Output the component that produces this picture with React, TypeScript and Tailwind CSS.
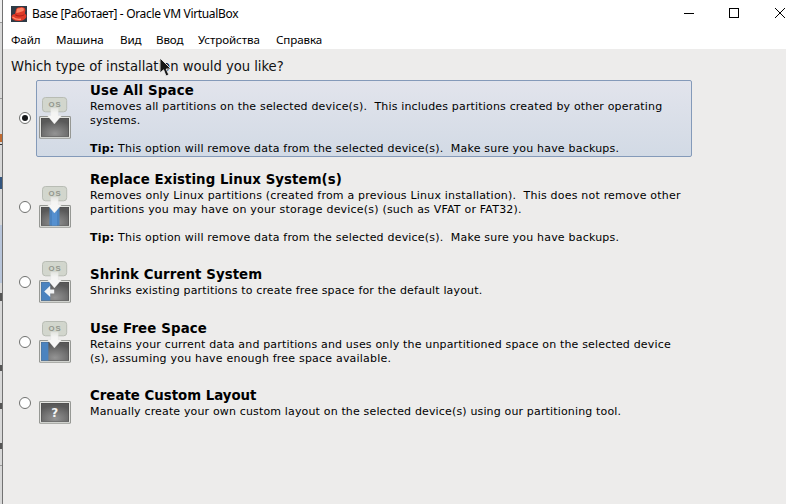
import type { ReactNode } from "react";

type Kind = "all" | "replace" | "shrink" | "free" | "custom";

function DiskIcon({ kind }: { kind: Kind }) {
  const id = `disk-${kind}`;
  return (
    <svg width="34" height="48" viewBox="0 0 34 48" className="block shrink-0">
      <defs>
        <radialGradient id={id} cx="50%" cy="85%" r="75%">
          <stop offset="0" stopColor="#949494" />
          <stop offset="1" stopColor="#595959" />
        </radialGradient>
        <linearGradient id={`${id}-arrow`} x1="0" y1="0" x2="0" y2="1">
          <stop offset="0" stopColor="#e2e4df" />
          <stop offset="0.3" stopColor="#f4f4f3" />
          <stop offset="1" stopColor="#f8f8f8" />
        </linearGradient>
      </defs>
      <rect x="1" y="22" width="32" height="22.8" rx="1.4" fill="#969894" />
      <rect x="2" y="23" width="30" height="20.8" rx="0.5" fill="#e4e5e1" />
      <rect x="3" y="24" width="28" height="18.8" fill="#4a4a4a" />
      <rect x="3.5" y="24.5" width="27" height="17.8" fill={`url(#${id})`} />
      {kind === "replace" && <rect x="11.5" y="24" width="10" height="18.6" fill="#4b83bf" />}
      {kind === "replace" && <rect x="14" y="24" width="5" height="18.6" fill="#5590d0" />}
      {kind === "shrink" && <rect x="3.2" y="24.2" width="9" height="18.4" fill="#4b83bf" />}
      {kind === "free" && <rect x="3.2" y="24.2" width="7.2" height="18.4" fill="#4b83bf" />}
      {kind === "custom" ? (
        <text x="16.8" y="37.6" textAnchor="middle" fill="#f4f4f4" fontSize="12" fontWeight="700" fontFamily="DejaVu Sans, sans-serif">?</text>
      ) : (
        <>
          <rect x="4.5" y="3.5" width="24.2" height="14.3" rx="3" fill="#d2d6cd" stroke="#b8bcb4" strokeWidth="1" />
          <text x="17" y="13" textAnchor="middle" fill="#92968e" fontSize="7.8" letterSpacing="0.8" fontWeight="700" fontFamily="Liberation Sans, sans-serif">OS</text>
          <path d="M12.7 14H20.3V21.5H23.8L16.4 30L9.2 21.5H12.7Z" fill={`url(#${id}-arrow)`} stroke="#dcdddb" strokeWidth="0.3" />
        </>
      )}
      {kind === "shrink" && <path d="M6.2 33.4L12.2 27.8V31.4H16.2V35.5H12.2V39Z" fill="#f2f4f5" />}
    </svg>
  );
}

function Radio({ checked, lift }: { checked?: boolean; lift: string }) {
  return (
    <span className={`flex h-[12px] w-[12px] shrink-0 items-center justify-center rounded-full border border-[#70716f] bg-white ${lift}`}>
      {checked && <span className="h-[6px] w-[6px] rounded-full bg-[#151719]" />}
    </span>
  );
}

interface OptionProps {
  kind: Kind;
  title: string;
  checked?: boolean;
  gap: string;
  height: string;
  lift?: string;
  tracking?: string;
  textShift?: string;
  children: ReactNode;
}

function Option({ kind, title, checked, gap, height, lift = "", tracking = "tracking-[0.07px]", textShift = "", children }: OptionProps) {
  return (
    <label className={`flex items-center pl-[16px] ${gap}`}>
      <Radio checked={checked} lift={lift} />
      <div
        className={`ml-[5px] flex w-[656px] items-center rounded-[2px] border ${height} ${
          checked ? "border-[#849ab9] bg-linear-to-b from-[#e2e4ec] to-[#d2dae5]" : "border-transparent"
        }`}
      >
        <div className={`ml-px ${lift}`}><DiskIcon kind={kind} /></div>
        <div className={`ml-[18px] whitespace-pre text-[11px] leading-[14px] ${textShift}`}>
          <h2 className={`text-[13.33px] leading-[18px] font-bold ${tracking}`}>{title}</h2>
          {children}
        </div>
      </div>
    </label>
  );
}

const menu = [
  { label: "Файл", width: "w-[45px]" },
  { label: "Машина", width: "w-[64px]" },
  { label: "Вид", width: "w-[36px]" },
  { label: "Ввод", width: "w-[42px]" },
  { label: "Устройства", width: "w-[78px]" },
  { label: "Справка", width: "w-[60px]" },
];

function TitleBar() {
  return (
    <header className="flex h-[28px] items-center bg-white pl-[8px] text-[12px] tracking-[-0.34px]">
      <svg width="18" height="16" viewBox="0 0 16 16" preserveAspectRatio="xMinYMid" className="block shrink-0">
        <rect width="16" height="16" fill="#2e3b46" />
        <path d="M0.5 11C0.5 9 2 8 4 8L5.2 3Q6 1.2 8 1.5Q10 .4 12 1.3Q14.5 1.8 14.4 4L13.8 7.5Q16 8.5 15.4 11Q13.8 14.5 9 15Q1.5 15.5 0.5 11Z" fill="#df3b28" />
        <path d="M6 3Q7 1.8 8.4 2.3Q11 1.2 13 2.7L12.4 5L8 6.5L5.2 7Z" fill="#ff8464" />
        <path d="M4.4 8.2Q9 11 13.5 8.2L13.2 9.2Q8 11.6 4 9.2Z" fill="#a62019" />
        <path d="M1.5 11Q5 14 10 13.2" fill="none" stroke="#ff8c6c" strokeWidth="1.4" />
      </svg>
      <span className="ml-[3px] whitespace-pre">Base [Работает] - Oracle VM VirtualBox</span>
      <div className="ml-auto flex h-full w-[102px] shrink-0 items-center">
        <svg width="102" height="28" viewBox="0 0 102 28" fill="none" stroke="#000" shapeRendering="crispEdges">
          <path d="M0 13.5H10M45.5 8.5H54.5V17.5H45.5Z" />
          <path d="M91 8L101 18M91 18L101 8" shapeRendering="auto" />
        </svg>
      </div>
    </header>
  );
}

const tip = (
  <p className="tracking-[0.2px]"><b>Tip:</b> This option will remove data from the selected device(s).  Make sure you have backups.</p>
);

export default function App() {
  return (
    <div className="flex h-[504px] w-[786px] overflow-hidden bg-[#edeceb] font-['DejaVu_Sans',sans-serif] text-black">
      <div className="flex w-[2px] shrink-0 flex-col bg-[#d8d8d8]">
        <div className="h-[22px] bg-[#eeeeee]" />
        <div className="h-px bg-[#999999]" />
        <div className="mt-[75px] h-px bg-[#999999]" />
        <div className="mt-[35px] h-[8px] bg-[#c26b30]" />
        <div className="mt-[2px] h-px bg-[#333333]" />
        <div className="mt-[32px] h-[12px] bg-[#33557f]" />
        <div className="mt-[36px] h-[58px] bg-[#b8c5da]" />
        <div className="mt-[10px] h-[8px] bg-[#555555]" />
        <div className="mt-[64px] h-[6px] bg-[#555555]" />
        <div className="mt-[32px] h-[6px] bg-[#555555]" />
        <div className="mt-[34px] h-[6px] bg-[#555555]" />
        <div className="mt-[16px] h-px bg-[#999999]" />
      </div>
      <div className="w-px shrink-0 bg-[#727272]" />
      <div className="relative min-w-0 flex-1">
        <div className="font-['Noto_Sans','Open_Sans',sans-serif]">
          <TitleBar />
          <nav className="flex h-[21px] bg-white pl-[8px] text-[11.6px] leading-[24px] tracking-[-0.1px]">
            {menu.map((item) => (
              <span key={item.label} className={`${item.width} shrink-0 whitespace-nowrap`}>{item.label}</span>
            ))}
          </nav>
        </div>
        <h1 className="h-[31px] pt-[8px] pl-[8px] font-['DejaVu_Sans_Condensed','DejaVu_Sans',sans-serif] text-[14.65px] leading-[18px] tracking-[-0.02px] whitespace-nowrap text-[#111111]">
          Which type of installation would you like?
        </h1>
        <main>
          <Option kind="all" title="Use All Space" checked gap="mt-0" height="h-[77px]" lift="mb-[2px]" tracking="tracking-[0.19px]">
            <p className="tracking-[0.17px]">Removes all partitions on the selected device(s).  This includes partitions created by other operating{"\n"}systems.</p>
            <div className="h-[14px]" />
            {tip}
          </Option>
          <Option kind="replace" title="Replace Existing Linux System(s)" gap="mt-[12px]" height="h-[77px]" lift="mb-[2px]">
            <p className="tracking-[0.204px]">Removes only Linux partitions (created from a previous Linux installation).  This does not remove other{"\n"}partitions you may have on your storage device(s) (such as VFAT or FAT32).</p>
            <div className="h-[14px]" />
            {tip}
          </Option>
          <Option kind="shrink" title="Shrink Current System" gap="mt-[12px]" height="h-[48px]">
            <p className="tracking-[0.16px]">Shrinks existing partitions to create free space for the default layout.</p>
          </Option>
          <Option kind="free" title="Use Free Space" gap="mt-[12px]" height="h-[48px]" tracking="tracking-[0.14px]" textShift="pt-[2px]">
            <p className="tracking-[0.17px]">Retains your current data and partitions and uses only the unpartitioned space on the selected device{"\n"}<span className="tracking-[0.2px]">(s), assuming you have enough free space available.</span></p>
          </Option>
          <Option kind="custom" title="Create Custom Layout" gap="mt-[13px]" height="h-[48px]" tracking="tracking-normal">
            <p className="tracking-[0.155px]">Manually create your own custom layout on the selected device(s) using our partitioning tool.</p>
          </Option>
        </main>
        <svg className="absolute top-[57px] left-[156px]" width="14" height="21" viewBox="0 0 14 21">
          <path d="M1 1V16L4.6 12.8L7 19L9.8 17.8L7.2 12H12Z" fill="#171717" stroke="#eeeeee" strokeWidth="0.9" />
        </svg>
      </div>
    </div>
  );
}
